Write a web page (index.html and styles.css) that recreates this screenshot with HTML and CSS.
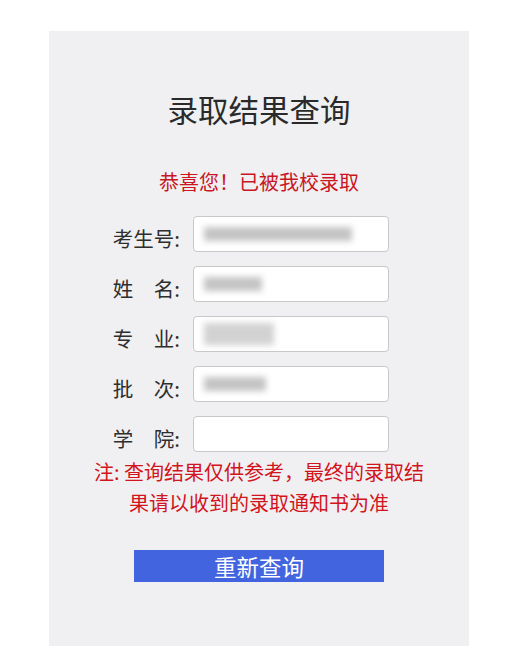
FILE: index.html
```html
<html>

<head>
    <meta charset="utf-8" />
    <link rel="stylesheet" href="styles.css">
</head>

<body>
    <div class="panel">
        <h1>录取结果查询</h1>
        <p class="congrats">恭喜您！已被我校录取</p>

        <div class="form">
            <div class="row">
                <label>考生号:</label>
                <div class="field"><span class="blur" style="width: 148px"></span></div>
            </div>
            <div class="row">
                <label>姓　名:</label>
                <div class="field"><span class="blur" style="width: 58px"></span></div>
            </div>
            <div class="row">
                <label>专　业:</label>
                <div class="field"><span class="blur light" style="width: 70px"></span></div>
            </div>
            <div class="row">
                <label>批　次:</label>
                <div class="field"><span class="blur" style="width: 62px"></span></div>
            </div>
            <div class="row">
                <label>学　院:</label>
                <div class="field"></div>
            </div>
        </div>

        <p class="note">注: 查询结果仅供参考，最终的录取结果请以收到的录取通知书为准</p>

        <div class="actions">
            <button class="btn">重新查询</button>
        </div>
    </div>
</body>
</html>
```

FILE: styles.css
```css
body {
    margin: 0;
    padding-top: 31px;
    background-color: #ffffff;
    font-family: "Noto Sans CJK SC", "Noto Sans", sans-serif;
}

.panel {
    width: 420px;
    height: 615px;
    margin: 0 auto;
    background-color: #f0f0f2;
    overflow: hidden;
}

h1 {
    margin: 60px 0 0 0;
    font-size: 30.5px;
    font-weight: normal;
    line-height: 36px;
    text-align: center;
    color: #2a2a2a;
}

.congrats {
    margin: 43px 0 0 0;
    font-size: 20px;
    line-height: 24px;
    text-align: center;
    color: #c9161f;
}

.form {
    margin-top: 22px;
    display: flex;
    flex-direction: column;
    gap: 14px;
}

.row {
    display: flex;
    align-items: center;
    gap: 13px;
}

.row label {
    width: 131px;
    text-align: right;
    font-size: 20.5px;
    line-height: 24px;
    padding-top: 8px;
    color: #2e2e2e;
}

.field {
    width: 196px;
    height: 36px;
    border: 1px solid #c8c8c8;
    border-radius: 4px;
    background-color: #ffffff;
    display: flex;
    align-items: center;
    padding-left: 10px;
    box-sizing: border-box;
}

.blur {
    display: block;
    height: 14px;
    background-color: #c4c4c4;
    filter: blur(3px);
}

.blur.light {
    height: 22px;
    background-color: #d2d2d2;
}

.note {
    width: 346px;
    margin: 4px auto 0 auto;
    font-size: 20px;
    line-height: 31px;
    text-align: center;
    color: #d2141c;
}

.actions {
    margin-top: 32px;
    display: flex;
    justify-content: center;
}

.btn {
    width: 250px;
    height: 32px;
    border: none;
    padding: 0;
    background-color: #4265df;
    color: #ffffff;
    font-family: "Noto Sans CJK SC", "Noto Sans", sans-serif;
    font-size: 22.5px;
    line-height: 32px;
}
```
